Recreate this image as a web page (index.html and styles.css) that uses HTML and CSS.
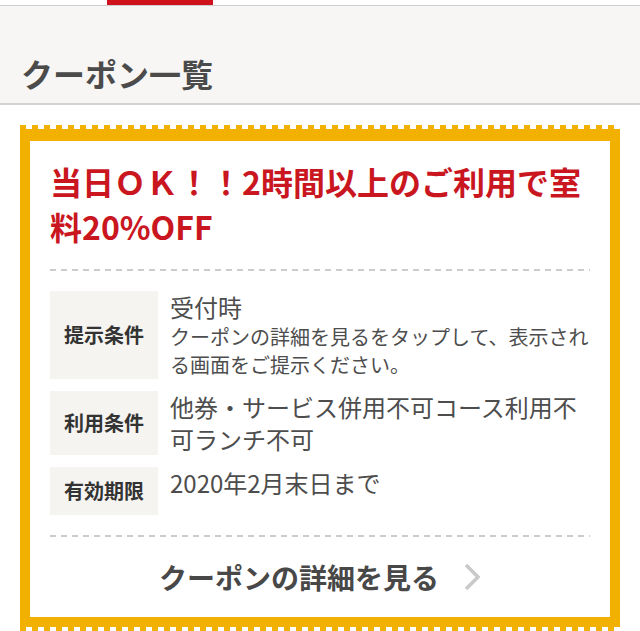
FILE: index.html
```html
<!DOCTYPE html>
<html lang="ja">
<head>
<meta charset="utf-8">
<title>クーポン一覧</title>
<link rel="stylesheet" href="styles.css">
</head>
<body>
<div class="tabs"><div class="tab-active"></div></div>
<header class="section-head">
  <h1 class="section-title">クーポン一覧</h1>
</header>
<main class="coupon">
  <div class="coupon-inner">
    <h2 class="coupon-title">当日ＯＫ！！2時間以上のご利用で室料20%OFF</h2>
    <div class="dash"></div>
    <dl class="conditions">
      <dt class="cond-label">提示条件</dt>
      <dd class="cond-value">受付時<span class="cond-note">クーポンの詳細を見るをタップして、表示される画面をご提示ください。</span></dd>
      <dt class="cond-label">利用条件</dt>
      <dd class="cond-value">他券・サービス併用不可コース利用不可ランチ不可</dd>
      <dt class="cond-label">有効期限</dt>
      <dd class="cond-value">2020年2月末日まで</dd>
    </dl>
    <div class="dash"></div>
    <a class="detail-link" href="#">
      <span class="detail-text">クーポンの詳細を見る</span>
      <svg class="chevron" width="18" height="30" viewBox="0 0 18 30" aria-hidden="true"><path d="M3 3 L15 15 L3 27" fill="none" stroke="#c9c9c9" stroke-width="3.5"/></svg>
    </a>
  </div>
</main>
</body>
</html>
```
FILE: styles.css
```css
* { box-sizing: border-box; }
html, body { margin: 0; padding: 0; background: #fff; }
body {
  width: 640px;
  font-family: "Noto Sans CJK JP", "Noto Sans", sans-serif;
  color: #4a4a4a;
}
.tabs {
  height: 6px;
  border-bottom: 1px solid #cfcfcf;
  background: #fff;
}
.tab-active {
  margin-left: 107px;
  width: 106px;
  height: 5px;
  background: #cf111c;
}
.section-head {
  background: #f7f6f4;
  border-bottom: 2px solid #d2d2d2;
  padding: 44px 21px 7px;
}
.section-title {
  margin: 0;
  font-size: 32px;
  line-height: 46px;
  font-weight: 700;
  color: #4b4b4b;
}
.coupon {
  margin: 20px 20px 0;
  padding: 16px 10px 14px;
  background:
    repeating-linear-gradient(90deg, transparent 0 6px, #fff 6px 12px) left top / 100% 4px no-repeat,
    repeating-linear-gradient(90deg, transparent 0 6px, #fff 6px 12px) left bottom / 100% 4px no-repeat,
    #f2b100;
}
.coupon-inner {
  background: #fff;
  padding: 18px 20px 0;
}
.coupon-title {
  margin: 0;
  font-size: 32px;
  line-height: 45px;
  font-weight: 700;
  color: #c9161f;
}
.dash {
  height: 2px;
  margin: 20px 0;
  background: repeating-linear-gradient(90deg, #cccccc 0 6px, transparent 6px 11px);
}
.conditions {
  margin: 0;
  display: grid;
  grid-template-columns: 108px 1fr;
  column-gap: 12px;
  row-gap: 12px;
}
.cond-label {
  margin: 0;
  background: #f5f4f1;
  font-size: 20px;
  line-height: 24px;
  font-weight: 700;
  color: #333;
  padding: 12px 0;
  display: flex;
  align-items: center;
  justify-content: center;
}
.cond-value {
  margin: 0;
  font-size: 24px;
  line-height: 32px;
  color: #4d4d4d;
}
.cond-note {
  display: block;
  font-size: 20px;
  line-height: 28px;
}
.dash + .detail-link { margin-top: -20px; }
.detail-link {
  height: 80px;
  display: flex;
  align-items: center;
  justify-content: center;
  gap: 24px;
  text-decoration: none;
  color: #484848;
}
.detail-text {
  font-size: 28px;
  font-weight: 700;
  line-height: 40px;
}
.chevron { display: block; }
```
